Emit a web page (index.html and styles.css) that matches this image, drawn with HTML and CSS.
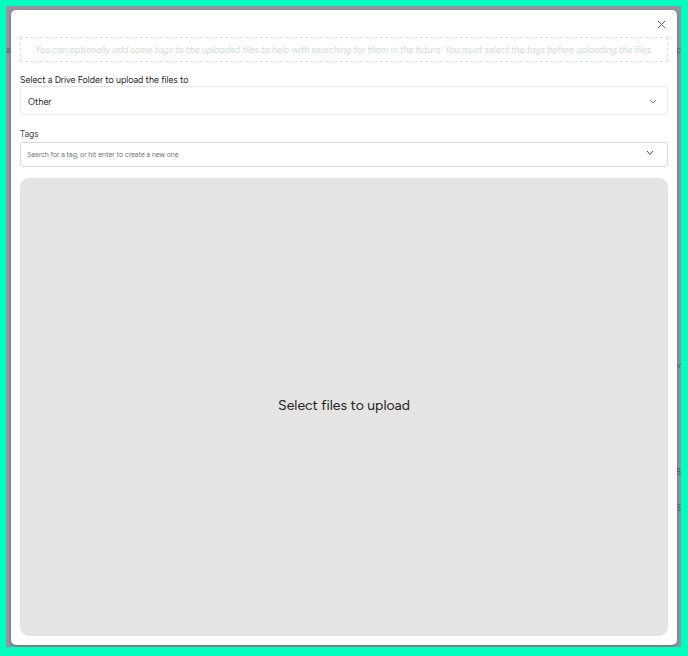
FILE: index.html
```html
<!DOCTYPE html>
<html lang="en">
<head>
    <meta charset="UTF-8">
    <meta name="viewport" content="width=device-width, initial-scale=1.0">
    <title>Upload files</title>
    <link rel="stylesheet" href="styles.css">
</head>
<body>

    <div class="overlay">
        <!-- page behind the modal -->
        <div class="behind" aria-hidden="true">
            <span class="peek peek-left">as</span>
            <span class="peek peek-owner">c</span>
            <span class="peek peek-type">v</span>
            <span class="peek peek-size">8</span>
            <span class="peek peek-total">3</span>
        </div>

        <div class="modal" role="dialog" aria-label="Upload files">
            <div class="modal-header">
                <button type="button" class="close" aria-label="Close">
                    <svg width="9" height="9" viewBox="0 0 9 9" fill="none" stroke="#666" stroke-width="1"><path d="M1 1l7 7M8 1l-7 7"/></svg>
                </button>
            </div>

            <p class="note">You can optionally add some tags to the uploaded files to help with searching for them in the future. You must select the tags before uploading the files.</p>

            <label class="folder-label" for="folder">Select a Drive Folder to upload the files to</label>
            <div class="field">
                <select id="folder" class="folder">
                    <option>Other</option>
                </select>
                <svg class="arrow arrow-folder" width="8" height="6" viewBox="0 0 8 6" fill="none" stroke="#888" stroke-width="1"><path d="M1 1l3 3 3-3"/></svg>
            </div>

            <label class="tags-label" for="tags">Tags</label>
            <div class="field">
                <input type="text" id="tags" class="tags" placeholder="Search for a tag, or hit enter to create a new one">
                <svg class="arrow arrow-tags" width="8" height="6" viewBox="0 0 8 6" fill="none" stroke="#444" stroke-width="1"><path d="M1 1l3 3.500 3-3.500"/></svg>
            </div>

            <button type="button" class="dropzone">Select files to upload</button>
        </div>
    </div>

</body>
</html>
```

FILE: styles.css
```css
* {
    box-sizing: border-box;
}
body {
    margin: 0;
    padding: 6px 7px 9px 6px;
    min-height: 100vh;
    display: flex;
    background-color: #00ffbf;
    font-family: Figtree, Lato, sans-serif;
    font-size: 9px;
    color: #222;
}
button, input, select {
    font-family: inherit;
}
.overlay {
    position: relative;
    flex: 1;
    display: flex;
    padding: 4px 4px 2px 5px;
    background-color: #9295a0;
    overflow: hidden;
}
.peek {
    position: absolute;
    line-height: 10px;
    color: #5d6069;
}
.peek-left {
    left: 0;
    top: 39px;
}
.peek-owner {
    right: 0;
    top: 39px;
}
.peek-type {
    right: 0;
    top: 354px;
}
.peek-size {
    right: 0;
    top: 461px;
}
.peek-total {
    right: 0;
    top: 497px;
}
.modal {
    position: relative;
    flex: 1;
    display: flex;
    flex-direction: column;
    padding: 9px;
    background-color: #fff;
    border-radius: 5px;
    box-shadow: 0 1px 3px rgba(60, 60, 80, 0.5);
}
.modal-header {
    display: flex;
    justify-content: flex-end;
    height: 18px;
}
.close {
    display: flex;
    padding: 1px 2px;
    height: 13px;
    border: none;
    background: none;
    cursor: pointer;
}
.note {
    margin: 0 0 12px;
    padding: 6px;
    border: 1px dashed #d8e3dc;
    font-style: italic;
    line-height: 11px;
    text-align: center;
    color: #cfddd3;
}
.folder-label {
    margin-bottom: 1px;
    line-height: 11px;
}
.tags-label {
    margin-top: 13px;
    margin-bottom: 2px;
    line-height: 12px;
    color: #444;
}
.field {
    position: relative;
    display: flex;
}
.folder {
    flex: 1;
    height: 29px;
    padding: 1px 7px 0;
    border: 1px solid #e8e8e8;
    border-radius: 3px;
    background-color: #fff;
    color: #222;
    font-size: 9px;
    appearance: none;
}
.tags {
    flex: 1;
    height: 25px;
    padding: 0 6px;
    border: 1px solid #d8d8da;
    border-radius: 3px;
    font-size: 7px;
    color: #222;
}
.tags::placeholder {
    color: #6b7280;
}
.arrow {
    position: absolute;
    pointer-events: none;
}
.arrow-folder {
    right: 11px;
    top: 13px;
}
.arrow-tags {
    right: 14px;
    top: 8px;
}
.dropzone {
    flex: 1;
    margin-top: 11px;
    padding-bottom: 4px;
    min-height: 120px;
    border: none;
    border-radius: 9px;
    background-color: #e5e4e2;
    color: #222;
    font-size: 14px;
    cursor: pointer;
}
```
